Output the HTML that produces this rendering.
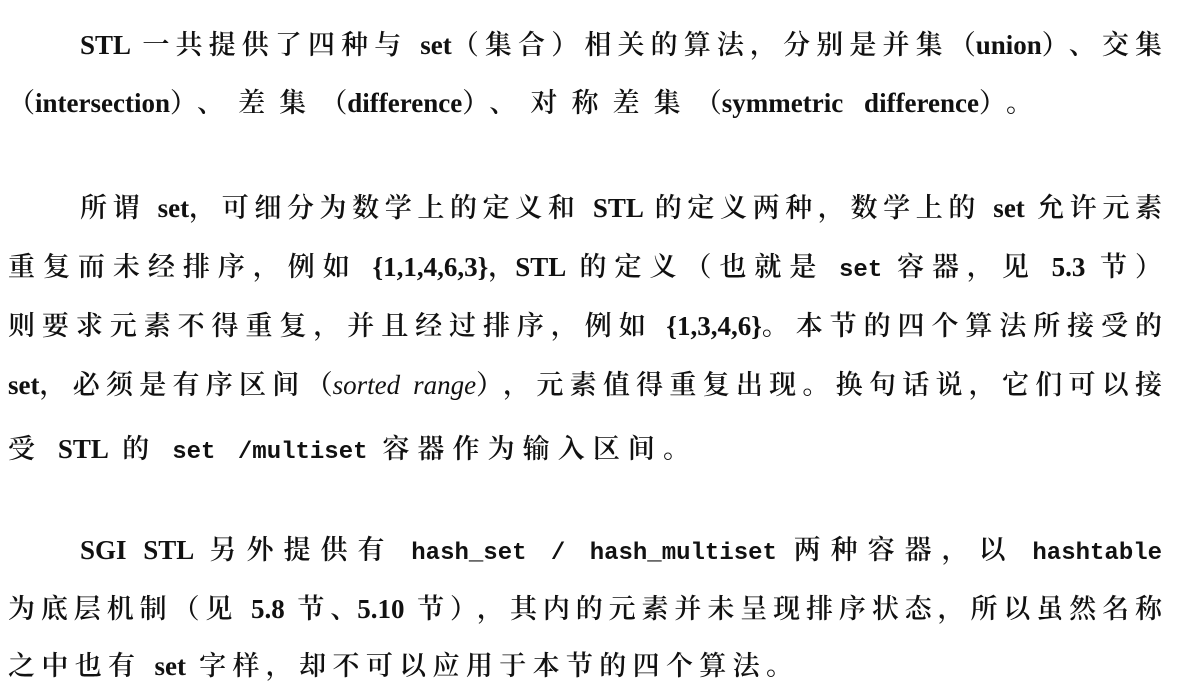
<!DOCTYPE html>
<html><head><meta charset="utf-8"><style>
body{margin:0;width:1200px;height:696px;background:#fff;overflow:hidden;position:relative;}
.l{position:absolute;height:32px;line-height:32px;font-size:27px;color:#111;white-space:nowrap;
font-family:"Liberation Serif","Noto Serif CJK SC",serif;font-weight:600;
text-align:justify;text-align-last:justify;}
.m{font-family:"Liberation Mono","Noto Sans CJK SC",monospace;font-size:24px;font-weight:bold;}
i{font-style:italic;font-weight:normal;}
.p{display:inline-block;width:27px;text-align:center;}
.pl{display:inline-block;width:27px;text-align:right;}
.pr{display:inline-block;width:27px;text-align:left;}
</style></head><body>
<div class="l" style="left:80px;width:1082px;top:29px">STL 一共提供了四种与 set<span class="pl">（</span>集合<span class="pr">）</span>相关的算法<span class="pr">，</span>分别是并集<span class="pl">（</span>union<span class="pr">）</span><span class="pr">、</span>交集</div>
<div class="l" style="left:8px;width:1025px;top:87px"><span class="pl">（</span>intersection<span class="pr">）</span><span class="pr">、</span>差集<span class="pl">（</span>difference<span class="pr">）</span><span class="pr">、</span>对称差集<span class="pl">（</span>symmetric difference<span class="pr">）</span><span class="p">。</span></div>
<div class="l" style="left:80px;width:1082px;top:192px">所谓 set<span class="pr">，</span>可细分为数学上的定义和 STL 的定义两种<span class="pr">，</span>数学上的 set 允许元素</div>
<div class="l" style="left:8px;width:1154px;top:251px">重复而未经排序<span class="pr">，</span>例如 {1,1,4,6,3}<span class="pr">，</span>STL 的定义<span class="pl">（</span>也就是 <span class="m">set</span> 容器<span class="pr">，</span>见 5.3 节<span class="pr">）</span></div>
<div class="l" style="left:8px;width:1154px;top:310px">则要求元素不得重复<span class="pr">，</span>并且经过排序<span class="pr">，</span>例如 {1,3,4,6}<span class="pr">。</span>本节的四个算法所接受的</div>
<div class="l" style="left:8px;width:1154px;top:369px">set<span class="pr">，</span>必须是有序区间<span class="pl">（</span><i>sorted range</i><span class="pr">）</span><span class="pr">，</span>元素值得重复出现<span class="pr">。</span>换句话说<span class="pr">，</span>它们可以接</div>
<div class="l" style="left:8px;width:682px;top:433px">受 STL 的 <span class="m">set /multiset</span> 容器作为输入区间<span class="pr">。</span></div>
<div class="l" style="left:80px;width:1082px;top:534px">SGI STL 另外提供有 <span class="m">hash_set / hash_multiset</span> 两种容器<span class="pr">，</span>以 <span class="m">hashtable</span></div>
<div class="l" style="left:8px;width:1154px;top:593px">为底层机制<span class="pl">（</span>见 5.8 节<span class="pr">、</span>5.10 节<span class="pr">）</span><span class="pr">，</span>其内的元素并未呈现排序状态<span class="pr">，</span>所以虽然名称</div>
<div class="l" style="left:8px;width:785px;top:650px">之中也有 set 字样<span class="pr">，</span>却不可以应用于本节的四个算法<span class="pr">。</span></div>
</body></html>
